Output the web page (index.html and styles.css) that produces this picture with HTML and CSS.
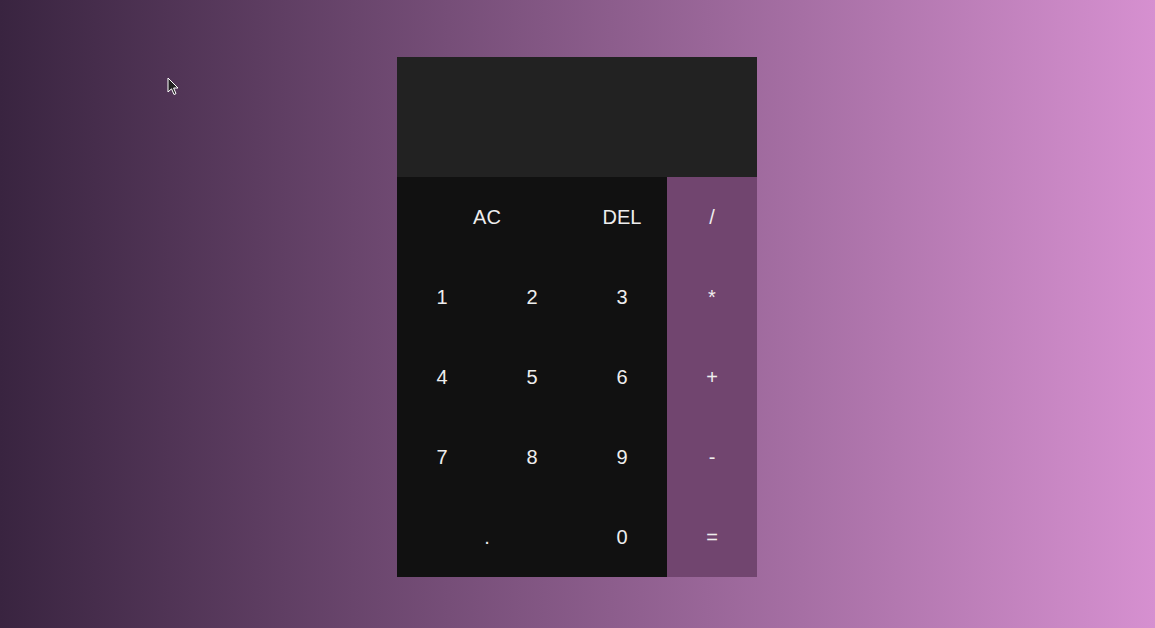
FILE: index.html
```html
<!DOCTYPE html>
<html>
<head>
<meta charset="utf-8">
<link rel="stylesheet" href="styles.css">
</head>
<body>
<div class="page">
  <div class="calculator">
    <div class="display"></div>
    <div class="keys">
      <button class="key span-2">AC</button>
      <button class="key">DEL</button>
      <button class="key op">/</button>
      <button class="key">1</button>
      <button class="key">2</button>
      <button class="key">3</button>
      <button class="key op">*</button>
      <button class="key">4</button>
      <button class="key">5</button>
      <button class="key">6</button>
      <button class="key op">+</button>
      <button class="key">7</button>
      <button class="key">8</button>
      <button class="key">9</button>
      <button class="key op">-</button>
      <button class="key span-2">.</button>
      <button class="key">0</button>
      <button class="key op">=</button>
    </div>
  </div>
  <svg class="cursor" width="14" height="20" viewBox="0 0 14 20"><path d="M1 1 L1 15 L4.5 11.8 L7 17.5 L9 16.6 L6.6 11 L11 11 Z" fill="#222" stroke="#fff" stroke-width="1"/></svg>
</div>
</body>
</html>
```
FILE: styles.css
```css
* { box-sizing: border-box; }
html, body { margin: 0; padding: 0; }
body {
  width: 1155px;
  height: 628px;
  overflow: hidden;
  background: linear-gradient(to right, #392440, #d690d0);
  font-family: "Liberation Sans", Arial, sans-serif;
}
.page {
  position: relative;
  height: 628px;
  display: flex;
  justify-content: center;
  padding-top: 57px;
}
.calculator {
  width: 360px;
  margin-right: 1px;
  display: flex;
  flex-direction: column;
  align-self: flex-start;
}
.display {
  height: 120px;
  background: #222222;
}
.keys {
  display: grid;
  grid-template-columns: repeat(4, 90px);
  grid-auto-rows: 80px;
  background: #111111;
}
.key {
  border: none;
  background: transparent;
  color: #eeeeee;
  font-family: inherit;
  font-size: 20px;
  padding: 0;
  display: flex;
  align-items: center;
  justify-content: center;
}
.key.span-2 { grid-column: span 2; }
.key.op { background: #71456f; }
.cursor {
  position: absolute;
  left: 167px;
  top: 77px;
}
```
